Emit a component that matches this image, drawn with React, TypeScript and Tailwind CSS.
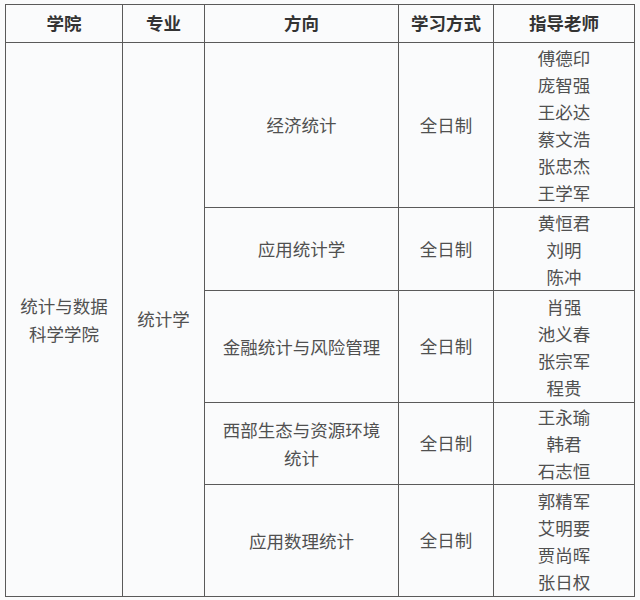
const rows = [
  {
    dir: ['经济统计'],
    teachers: ['傅德印', '庞智强', '王必达', '蔡文浩', '张忠杰', '王学军'],
    h: 'h-[165px]',
  },
  { dir: ['应用统计学'], teachers: ['黄恒君', '刘明', '陈冲'], h: 'h-[83px]' },
  {
    dir: ['金融统计与风险管理'],
    teachers: ['肖强', '池义春', '张宗军', '程贵'],
    h: 'h-[112px]',
  },
  {
    dir: ['西部生态与资源环境', '统计'],
    teachers: ['王永瑜', '韩君', '石志恒'],
    h: 'h-[82px]',
  },
  {
    dir: ['应用数理统计'],
    teachers: ['郭精军', '艾明要', '贾尚晖', '张日权'],
    h: 'h-[112px]',
  },
]

const cell = 'border border-[#5a5a5a] text-center align-middle p-0'

export default function App() {
  return (
    <div
      className="w-[640px] h-[600px] bg-[#fafbfc] pt-[4px] pl-[5px]"
      style={{ fontFamily: '"Noto Sans CJK SC", "Noto Sans", sans-serif' }}
    >
      <table className="table-fixed border-collapse w-[629px] text-[17.5px] text-[#505050]">
        <colgroup>
          <col className="w-[117px]" />
          <col className="w-[82px]" />
          <col className="w-[194px]" />
          <col className="w-[95px]" />
          <col className="w-[141px]" />
        </colgroup>
        <thead>
          <tr className="h-[38px]">
            {['学院', '专业', '方向', '学习方式', '指导老师'].map((t) => (
              <th key={t} className={`${cell} font-bold text-[#333]`}>
                {t}
              </th>
            ))}
          </tr>
        </thead>
        <tbody>
          {rows.map((r, i) => (
            <tr key={i} className={r.h}>
              {i === 0 && (
                <>
                  <td rowSpan={5} className={`${cell} px-[8px] leading-[28px]`}>
                    统计与数据科学学院
                  </td>
                  <td rowSpan={5} className={cell}>
                    统计学
                  </td>
                </>
              )}
              <td className={`${cell} leading-[28px]`}>
                {r.dir.map((d) => (
                  <div key={d}>{d}</div>
                ))}
              </td>
              <td className={cell}>全日制</td>
              <td className={`${cell} leading-[27px]`}>
                {r.teachers.map((t) => (
                  <div key={t}>{t}</div>
                ))}
              </td>
            </tr>
          ))}
        </tbody>
      </table>
    </div>
  )
}
